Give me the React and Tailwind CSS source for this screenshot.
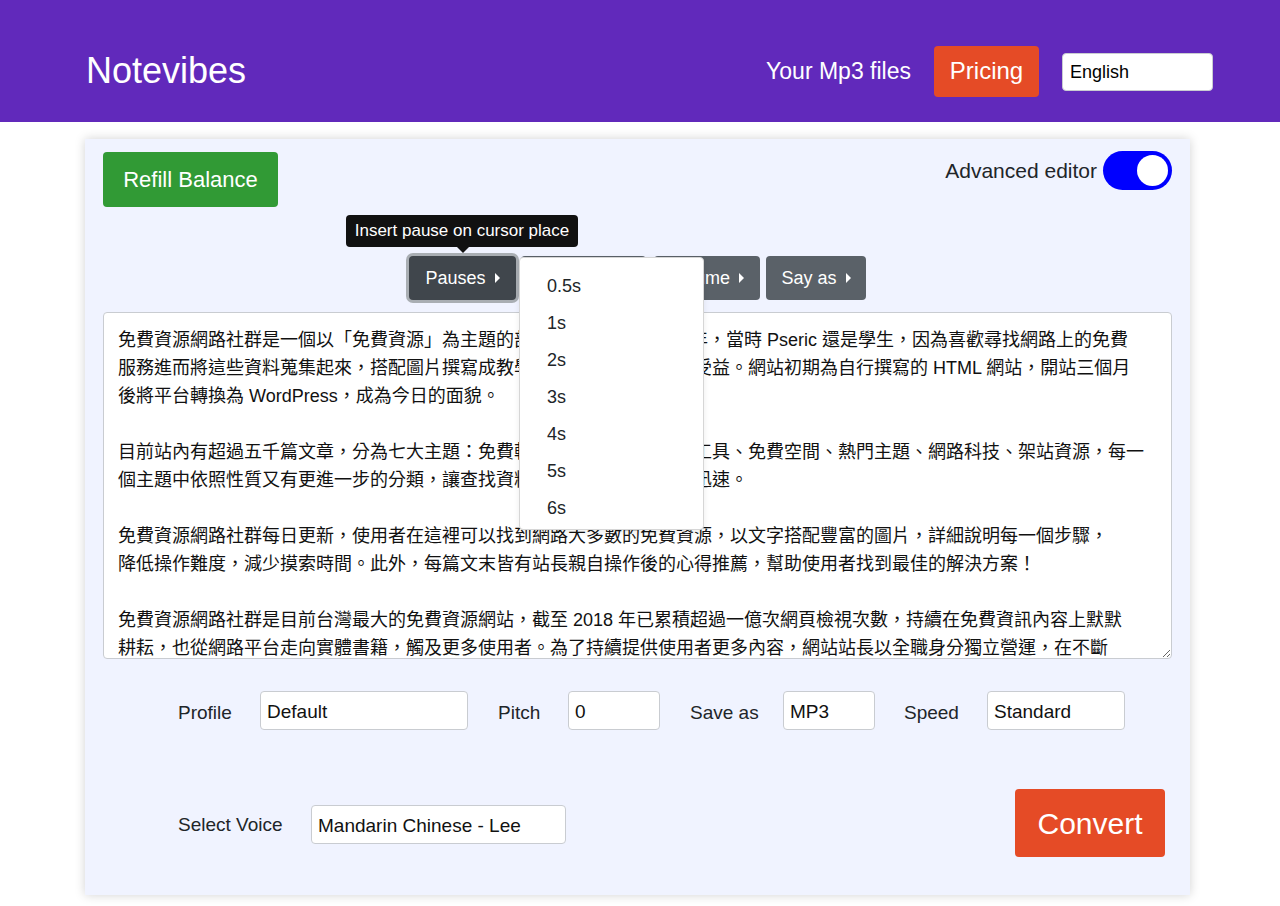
import { useState } from "react";

const TEXT = [
  "免費資源網路社群是一個以「免費資源」為主題的部落格，成立於 2008 年，當時 Pseric 還是學生，因為喜歡尋找網路上的免費",
  "服務進而將這些資料蒐集起來，搭配圖片撰寫成教學文章，讓更多使用者受益。網站初期為自行撰寫的 HTML 網站，開站三個月",
  "後將平台轉換為 WordPress，成為今日的面貌。",
  "",
  "目前站內有超過五千篇文章，分為七大主題：免費軟體、免費資源、線上工具、免費空間、熱門主題、網路科技、架站資源，每一",
  "個主題中依照性質又有更進一步的分類，讓查找資料變得更加簡單、更加迅速。",
  "",
  "免費資源網路社群每日更新，使用者在這裡可以找到網路大多數的免費資源，以文字搭配豐富的圖片，詳細說明每一個步驟，",
  "降低操作難度，減少摸索時間。此外，每篇文末皆有站長親自操作後的心得推薦，幫助使用者找到最佳的解決方案！",
  "",
  "免費資源網路社群是目前台灣最大的免費資源網站，截至 2018 年已累積超過一億次網頁檢視次數，持續在免費資訊內容上默默",
  "耕耘，也從網路平台走向實體書籍，觸及更多使用者。為了持續提供使用者更多內容，網站站長以全職身分獨立營運，在不斷",
  "嘗試與學習中持續成長，希望能為使用者帶來更多實用的免費資源。",
].join("\n");

const PAUSES = ["0.5s", "1s", "2s", "3s", "4s", "5s", "6s"];

const Caret = () => (
  <svg width="5" height="10" viewBox="0 0 5 10" className="ml-[9px]">
    <path d="M0 0 L5 5 L0 10 Z" fill="white" />
  </svg>
);

const ToolButton = ({ label, className }) => (
  <button className={`flex h-[44px] items-center justify-center rounded-[4px] bg-[#5a6168] text-[18px] text-white ${className}`}>
    {label}
    <Caret />
  </button>
);

const Field = ({ value, className }) => (
  <div className={`flex h-[39px] items-center rounded-[4px] border border-[#c9ccd1] bg-white pl-[6px] pt-[4px] text-[19px] text-[#111] ${className}`}>
    {value}
  </div>
);

const App = () => {
  const [advanced, setAdvanced] = useState(true);

  return (
    <div className="min-h-screen bg-white font-['Liberation_Sans','Noto_Sans_CJK_TC',sans-serif] text-[#212529]">
      {/* Header */}
      <header className="flex h-[122px] items-center bg-[#6129bb] pl-[86px] pr-[67px] pt-[20px]">
        <h1 className="text-[36px] text-white">Notevibes</h1>
        <div className="ml-auto flex items-center">
          <span className="text-[23px] text-white">Your Mp3 files</span>
          <button className="ml-[23px] h-[51px] w-[105px] rounded-[4px] bg-[#e54b26] text-[24px] text-white">Pricing</button>
          <div className="ml-[23px] mt-[1px] flex h-[38px] w-[151px] items-center rounded-[4px] border border-[#c9ccd1] bg-white pl-[7px] pt-[2px] text-[18px] text-black">
            English
          </div>
        </div>
      </header>

      {/* Editor card */}
      <main className="ml-[85px] mt-[17px] w-[1105px] bg-[#f0f3ff] px-[18px] pb-[38px] pt-[13px] shadow-[0_0_10px_rgba(0,0,0,0.18)]">
        <div className="flex items-start justify-between">
          <button className="h-[55px] w-[175px] rounded-[4px] bg-[#319a35] text-[22px] text-white">Refill Balance</button>
          <div className="-mt-[1px] flex items-center">
            <span className="text-[21px] text-[#212529]">Advanced editor</span>
            <button
              onClick={() => setAdvanced(!advanced)}
              className="ml-[6px] flex h-[39px] w-[69px] items-center justify-end rounded-full bg-[#0000ff] pr-[4px]"
            >
              <span className="h-[31px] w-[31px] rounded-full bg-white" />
            </button>
          </div>
        </div>

        {/* Toolbar */}
        <div className="mt-[49px] flex justify-center">
          <div className="relative">
            <button className="flex h-[44px] w-[107px] items-center justify-center rounded-[4px] bg-[#40464c] text-[18px] text-white ring-[3px] ring-[#a9aeb3]">
              Pauses
              <Caret />
            </button>
            <div className="absolute -left-[63px] -top-[41px] z-10 flex h-[32px] w-[232px] items-center justify-center rounded-[4px] bg-[#111] text-[17px] text-white">
              Insert pause on cursor place
              <span className="absolute -bottom-[6px] left-[111px] h-0 w-0 border-x-[6px] border-t-[6px] border-x-transparent border-t-[#111]" />
            </div>
            <div className="absolute left-[110px] top-[1px] z-10 w-[185px] rounded-[4px] border border-[#d6d6d6] bg-white pb-[2px] pt-[10px] shadow-[0_2px_6px_rgba(0,0,0,0.08)]">
              {PAUSES.map((p) => (
                <div key={p} className="flex h-[37px] items-center pl-[27px] text-[18px] text-[#212529]">
                  {p}
                </div>
              ))}
            </div>
          </div>
          <ToolButton label="Emphasis" className="ml-[5px] w-[125px]" />
          <ToolButton label="Volume" className="ml-[8px] w-[106px]" />
          <ToolButton label="Say as" className="ml-[6px] w-[100px]" />
        </div>

        {/* Text */}
        <textarea
          defaultValue={TEXT}
          className="mt-[12px] block h-[347px] w-full overflow-hidden rounded-[4px] border border-[#c9ccd1] bg-white px-[14px] pt-[13px] text-[18px] leading-[28px] text-[#111] outline-none"
        />

        {/* Settings */}
        <div className="mt-[32px] flex items-center pl-[75px] text-[19px] text-[#212529]">
          <span className="w-[82px] pt-[5px]">Profile</span>
          <Field value="Default" className="w-[208px]" />
          <span className="ml-[30px] w-[70px] pt-[5px]">Pitch</span>
          <Field value="0" className="w-[92px]" />
          <span className="ml-[30px] w-[93px] pt-[5px]">Save as</span>
          <Field value="MP3" className="w-[92px]" />
          <span className="ml-[29px] w-[83px] pt-[5px]">Speed</span>
          <Field value="Standard" className="w-[138px]" />
        </div>

        <div className="mt-[59px] flex items-center pl-[75px] pr-[7px] text-[19px] text-[#212529]">
          <span className="w-[133px] pt-[5px]">Select Voice</span>
          <Field value="Mandarin Chinese - Lee" className="mt-[3px] w-[255px]" />
          <button className="ml-auto h-[68px] w-[150px] rounded-[4px] bg-[#e54b26] text-[30px] text-white">Convert</button>
        </div>
      </main>
    </div>
  );
};

export default App;
